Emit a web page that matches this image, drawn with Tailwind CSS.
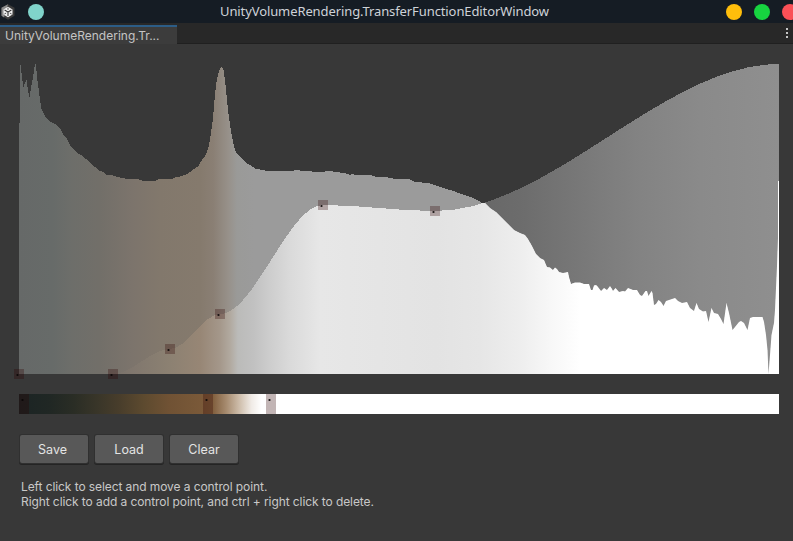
<!DOCTYPE html>
<html lang="en">
<head>
<meta charset="utf-8">
<title>UnityVolumeRendering.TransferFunctionEditorWindow</title>
<script src="https://cdn.jsdelivr.net/npm/@tailwindcss/browser@4"></script>
</head>
<body class="h-[541px] w-[793px] overflow-hidden bg-[#383838] font-['Inter',sans-serif] text-[12px] text-[#c8c8c8]">
<div class="flex h-full flex-col">
  <header class="flex h-[23px] shrink-0 items-center overflow-hidden bg-[#151c24] pt-px">
    <svg class="h-[18px] w-[18px] shrink-0" viewBox="0 0 18 18">
      <path d="M8 1.300 L14.500 4.800 V12.800 L8 16.800 L1.500 12.800 V4.800 Z" fill="#3b3b3b"/>
      <path d="M8 1.300 L1.500 4.800 V12.800 L4 14.400 Z" fill="#8b8b8b"/>
      <path d="M8 3.800 L12.500 6.400 V11.600 L8 14.200 L3.500 11.600 V6.400 Z" fill="#f2f2f2"/>
      <path d="M8 9 V13 M8 9 L4.600 7.100 M8 9 L11.400 7.100" stroke="#333" stroke-width="1.100" fill="none"/>
      <path d="M8 4.800 V6.800 M4.400 11 L6.200 10 M11.600 11 L9.800 10" stroke="#555" stroke-width="1" fill="none"/>
    </svg>
    <span class="ml-[10px] size-4 shrink-0 rounded-full bg-[#80d4cb]"></span>
    <h1 class="ml-[176px] w-[329px] shrink-0 whitespace-nowrap pb-[3px] font-['Noto_Sans',sans-serif] text-[13px] font-normal leading-5 tracking-[-0.1px] text-[#ced2d8]">UnityVolumeRendering.TransferFunctionEditorWindow</h1>
    <div class="ml-[177px] flex shrink-0 gap-3">
      <span class="size-4 shrink-0 rounded-full bg-[#ffbe0b]"></span>
      <span class="size-4 shrink-0 rounded-full bg-[#17d440]"></span>
      <span class="size-4 shrink-0 rounded-full bg-[#fa5057]"></span>
    </div>
  </header>
  <nav class="flex h-[21px] shrink-0 items-end justify-between bg-[#282828]">
    <div class="flex h-[19px] w-[177px] items-center border-t-2 border-[#2c5d87] bg-[#3c3c3c] pl-[5px] text-[#c4c4c4]">UnityVolumeRendering.Tr...</div>
    <div class="flex h-full flex-1 items-center justify-end border-b border-[#202020] pr-[5px]">
      <svg class="h-[10px] w-[2px]" viewBox="0 0 2 10" fill="#c4c4c4" shape-rendering="crispEdges"><rect width="2" height="2"/><rect y="4" width="2" height="2"/><rect y="8" width="2" height="2"/></svg>
    </div>
  </nav>
  <main class="flex flex-col px-[19px] pt-5">
    <svg class="h-[310px] w-[760px] overflow-visible" viewBox="19 64 760 310" shape-rendering="crispEdges">
      <defs>
        <linearGradient id="histFill" gradientUnits="userSpaceOnUse" x1="0" x2="793" y1="0" y2="0">
          <stop offset=".024" stop-color="#666968"/><stop offset=".066" stop-color="#676b69"/><stop offset=".09" stop-color="#6d6e6a"/><stop offset=".126" stop-color="#726f69"/><stop offset=".166" stop-color="#7c746c"/><stop offset=".202" stop-color="#82786c"/><stop offset=".252" stop-color="#857a6d"/><stop offset=".269" stop-color="#8a7f74"/><stop offset=".288" stop-color="#97918a"/><stop offset=".299" stop-color="#9a9a98"/><stop offset=".32" stop-color="#9b9b9b"/><stop offset=".62" stop-color="#9b9b9b"/>
        </linearGradient>
        <linearGradient id="bothFill" gradientUnits="userSpaceOnUse" x1="0" x2="793" y1="0" y2="0">
          <stop offset=".142" stop-color="#77716a"/><stop offset=".166" stop-color="#80776e"/><stop offset=".214" stop-color="#8c8172"/><stop offset=".252" stop-color="#978675"/><stop offset=".277" stop-color="#a4978a"/><stop offset=".29" stop-color="#b1a99f"/><stop offset=".3" stop-color="#bbbbb9"/><stop offset=".32" stop-color="#c1c1c1"/><stop offset=".34" stop-color="#cdcdcd"/><stop offset=".366" stop-color="#dadada"/><stop offset=".404" stop-color="#e7e7e7"/><stop offset=".55" stop-color="#e3e3e3"/><stop offset=".605" stop-color="#e6e6e6"/><stop offset=".656" stop-color="#eeeeee"/><stop offset=".694" stop-color="#f7f7f7"/><stop offset=".732" stop-color="#ffffff"/>
        </linearGradient>
        <linearGradient id="alphaFill" gradientUnits="userSpaceOnUse" x1="0" x2="793" y1="0" y2="0">
          <stop offset=".61" stop-color="#686868"/><stop offset=".656" stop-color="#6c6c6c"/><stop offset=".706" stop-color="#747474"/><stop offset=".757" stop-color="#7c7c7c"/><stop offset=".807" stop-color="#838383"/><stop offset=".883" stop-color="#8a8a8a"/><stop offset=".982" stop-color="#8f8f8f"/>
        </linearGradient>
        <path id="hist" d="M19 374V123H20V65H21L21.5 73L23.3 88L25 83L26.7 80L28 91L29.5 97L31 88L33 78L35 64H36L37 77L38.5 88L40 100L41.5 109L44 114.500L48 120L52 122.500L56 124.500L60 128L63 134L67 139L70 145L73 149L76 152L81 155L86 159L90 163L95 167L98 170L103 172L107 175L113 175.500L117 177L122 178L127 179L138 179.300L143 181H155L158 179.300L172 179L175 177.500L180 176.500L186 174.500L190 172L194 169L198 166.500L201 161.500L205 156L207 152L209 145L211 133L213 118L214.500 100L216 85L217.500 77L219 71L220.500 67.500L222 67L223.500 70L225 80L226.500 95L228 110L230 125L232 137L234 146L236 152L239 156L243 160L247 163.500L251 165.500L255 168.500L262 170L267 171L284 171.300L290 171L297 170L303 171L320 172L330 171L340 172.500L346 173.500L350 175L352 173.500L355 175L366 175.500L370 175L375 176.500L388 177.500L395 179L410 179.500L415 182L428 183L433 184.500L438 186L448 189.500L454 191L461 194L468 196L474 198.500L479 201L482 203H485L490 208L496 212L502 218L508 224L514 230L520 233L525 235L528 239L532 246L536 254L540 258L544 260L547 267L550 267.500L553 270L555 267.500L557 269L559 272L563 273L568 272L569 277L571 284L575 282.500H580L584 284H589L591 290H592.500L594 285.500L596 285L598 287L601 291L604 288L607 290L610 286L612 289L613 291L615.500 288L619 292L623 291L625 291.500L628 288L633 290H637L640 295L642 296L645.500 291L647 291L648.500 296L651.500 291L652.500 293L654 305L656 304L658.500 300L661 302L663.500 306L666 301L669 300L672 299L675 298L678 301L682 303L687 302L690 308L694 311L696.500 303L699 309L703 311.500L706 311L708.500 322L711.500 308L714 313L718 314L721 319L723.500 324L726.500 303L729 313L732.500 330L735 327L739 322L741 321L744 323L747.500 330L750 318L753 317H762.500L764 322L766 335L767.500 350L768.500 374L770 355L771.500 335L774 323L775 310L776 288L777 266L778 238V181H779V374Z"/>
        <path id="curve" d="M19 374H113C131.700 374 151.300 349 170 349C186.700 349 203.300 314 220 314C254.300 314 288.700 205 323 205C360.300 205 397.700 211 435 211C549.700 211 664.300 64 779 64V374Z"/>
        <clipPath id="histClip"><use href="#hist"/></clipPath>
      </defs>
      <use href="#curve" fill="url(#alphaFill)"/>
      <use href="#hist" fill="url(#histFill)"/>
      <g clip-path="url(#histClip)"><use href="#curve" fill="url(#bothFill)"/></g>
      <g id="alphaPoints"></g>
    </svg>
    <svg class="mt-5 h-5 w-[760px]" viewBox="19 394 760 20" shape-rendering="crispEdges">
      <defs>
        <linearGradient id="palette" gradientUnits="userSpaceOnUse" x1="19" x2="269" y1="0" y2="0">
          <stop offset="0" stop-color="#1b2424"/><stop offset=".12" stop-color="#202724"/><stop offset=".22" stop-color="#2a2d25"/><stop offset=".32" stop-color="#3a3629"/><stop offset=".4" stop-color="#483d2b"/><stop offset=".5" stop-color="#5d4a2f"/><stop offset=".6" stop-color="#705234"/><stop offset=".74" stop-color="#7b5a39"/><stop offset=".776" stop-color="#815f3e"/><stop offset=".83" stop-color="#a78c70"/><stop offset=".884" stop-color="#d0c0ae"/><stop offset=".93" stop-color="#f0ebe6"/><stop offset=".97" stop-color="#ffffff"/>
        </linearGradient>
      </defs>
      <rect x="19" y="394" width="760" height="20" fill="url(#palette)"/>
      <g id="colorPoints"></g>
    </svg>
    <div class="mt-[21px] flex gap-[7px] pl-px text-[12.500px] text-[#e4e4e4]">
      <button class="h-7 w-[68px] rounded-[2px] bg-[#585858] pr-[3px] pt-[2px] shadow-[0_0_0_1px_#303030,0_1px_0_1px_#242424]">Save</button>
      <button class="h-7 w-[68px] rounded-[2px] bg-[#585858] pt-[2px] shadow-[0_0_0_1px_#303030,0_1px_0_1px_#242424]">Load</button>
      <button class="h-7 w-[68px] rounded-[2px] bg-[#585858] pt-[2px] shadow-[0_0_0_1px_#303030,0_1px_0_1px_#242424]">Clear</button>
    </div>
    <p class="mt-4 whitespace-nowrap pl-[2px] leading-[15px] tracking-[-0.085px]"><span>Left click to select and move a control point.</span><br><span>Right click to add a control point, and ctrl + right click to delete.</span></p>
  </main>
</div>
<script>
const NS = 'http://www.w3.org/2000/svg';
function rect(parent, x, y, w, h, fill) {
  const r = document.createElementNS(NS, 'rect');
  Object.entries({x, y, width: w, height: h, fill}).forEach(([k, v]) => r.setAttribute(k, v));
  parent.appendChild(r);
}
function handle(parent, x, y, h, dotX, dotY) {
  rect(parent, x, y, 10, h, 'rgba(45,0,0,.29)');
  rect(parent, dotX, dotY, 1, 2, 'rgba(10,6,6,.75)');
  rect(parent, dotX - 1, dotY, 3, 2, 'rgba(10,6,6,.35)');
}
const alpha = document.getElementById('alphaPoints');
[[19,374],[113,374],[170,349],[220,314],[323,205],[435,211]].forEach(([x, y]) => handle(alpha, x - 5, y - 5, 10, x - 2, y));
const color = document.getElementById('colorPoints');
[19,203,266].forEach(x => handle(color, x, 394, 20, x + 3, 399));
</script>
</body>
</html>
